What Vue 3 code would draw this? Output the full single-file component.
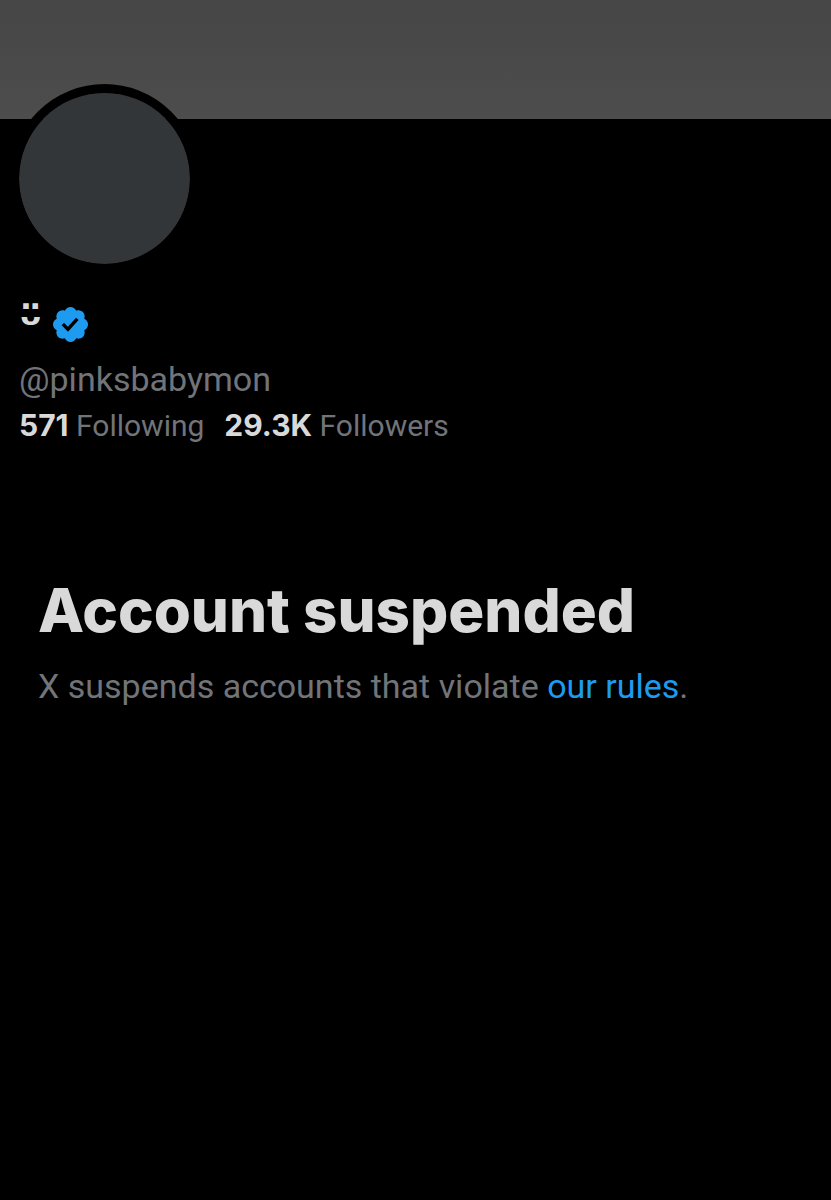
<template>
  <main class="profile">
    <div class="banner"></div>
    <div class="avatar"></div>

    <section class="user-info">
      <div class="name-row">
        <h2 class="name">{{ user.name }}</h2>
        <svg class="verified" viewBox="0 0 22 22" role="img" aria-label="Verified account">
          <path d="M20.396 11c-.018-.646-.215-1.275-.57-1.816-.354-.54-.852-.972-1.438-1.246.223-.607.27-1.264.14-1.897-.131-.634-.437-1.218-.882-1.687-.47-.445-1.053-.75-1.687-.882-.633-.13-1.29-.083-1.897.14-.273-.587-.704-1.086-1.245-1.44S11.647 1.62 11 1.604c-.646.017-1.273.213-1.813.568s-.969.854-1.24 1.44c-.608-.223-1.267-.272-1.902-.14-.635.13-1.22.436-1.69.882-.445.47-.749 1.055-.878 1.688-.13.633-.08 1.29.144 1.896-.587.274-1.087.705-1.443 1.245-.356.54-.555 1.17-.574 1.817.02.647.218 1.276.574 1.817.356.54.856.972 1.443 1.245-.224.606-.274 1.263-.144 1.896.13.634.433 1.218.877 1.688.47.443 1.054.747 1.687.878.633.132 1.29.084 1.897-.136.274.586.705 1.084 1.246 1.439.54.354 1.17.551 1.816.569.647-.016 1.276-.213 1.817-.567s.972-.854 1.245-1.44c.604.239 1.266.296 1.903.164.636-.132 1.22-.447 1.68-.907.46-.46.776-1.044.908-1.681s.075-1.299-.165-1.903c.586-.274 1.084-.705 1.439-1.246.354-.54.551-1.17.569-1.816zM9.662 14.85l-3.429-3.428 1.293-1.302 2.072 2.072 4.4-4.794 1.347 1.246z" />
        </svg>
      </div>
      <p class="handle">@{{ user.handle }}</p>
      <nav class="stats">
        <a href="#following"><strong>{{ user.following }}</strong> Following</a>
        <a href="#followers"><strong>{{ user.followers }}</strong> Followers</a>
      </nav>
    </section>

    <section class="notice">
      <h1>Account suspended</h1>
      <p>X suspends accounts that violate <a href="#rules">our rules</a>.</p>
    </section>
  </main>
</template>

<script setup>
const user = {
  name: 'ᵕ̈',
  handle: 'pinksbabymon',
  following: '571',
  followers: '29.3K'
}
</script>

<style>
body {
  background-color: #000;
}
</style>

<style scoped>
.profile {
  min-height: 100vh;
  background-color: #000;
  color: #717478;
  font-family: Roboto, "Liberation Sans", sans-serif;
}

.banner {
  height: 119px;
  background: linear-gradient(#464646, #4d4d4d);
}

.avatar {
  width: 171px;
  height: 171px;
  margin: -35px 0 0 10px;
  border: 9px solid #000;
  border-radius: 50%;
  background-color: #333639;
  background-clip: padding-box;
}

.user-info {
  padding: 24px 19px 0;
}

.name-row {
  display: flex;
  align-items: center;
  gap: 8px;
  height: 54px;
}

.name {
  margin: 0;
  color: #d9d9d9;
  font-family: "DejaVu Sans", sans-serif;
  font-size: 48px;
  line-height: 54px;
  font-weight: 700;
}

.verified {
  width: 41px;
  height: 41px;
  fill: #1d9bf0;
}

.handle {
  margin: 6px 0 0;
  font-size: 34px;
  line-height: 44px;
}

.stats {
  display: flex;
  flex-wrap: wrap;
  gap: 20px;
  margin-top: 2px;
  font-size: 30px;
  line-height: 44px;
}

.stats a {
  color: inherit;
  text-decoration: none;
}

.stats strong {
  color: #d9d9d9;
  font-family: Inter, "Liberation Sans", sans-serif;
  font-weight: 700;
}

.notice {
  padding: 120px 38px 40px;
}

.notice h1 {
  margin: 0;
  color: #d9d9d9;
  font-family: Inter, "Liberation Sans", sans-serif;
  font-size: 60px;
  line-height: 84px;
  font-weight: 800;
}

.notice p {
  margin: 12px 0 0;
  font-size: 34px;
  line-height: 44px;
}

.notice a {
  color: #1d9bf0;
  text-decoration: none;
}

.notice a:hover,
.stats a:hover {
  text-decoration: underline;
}
</style>
